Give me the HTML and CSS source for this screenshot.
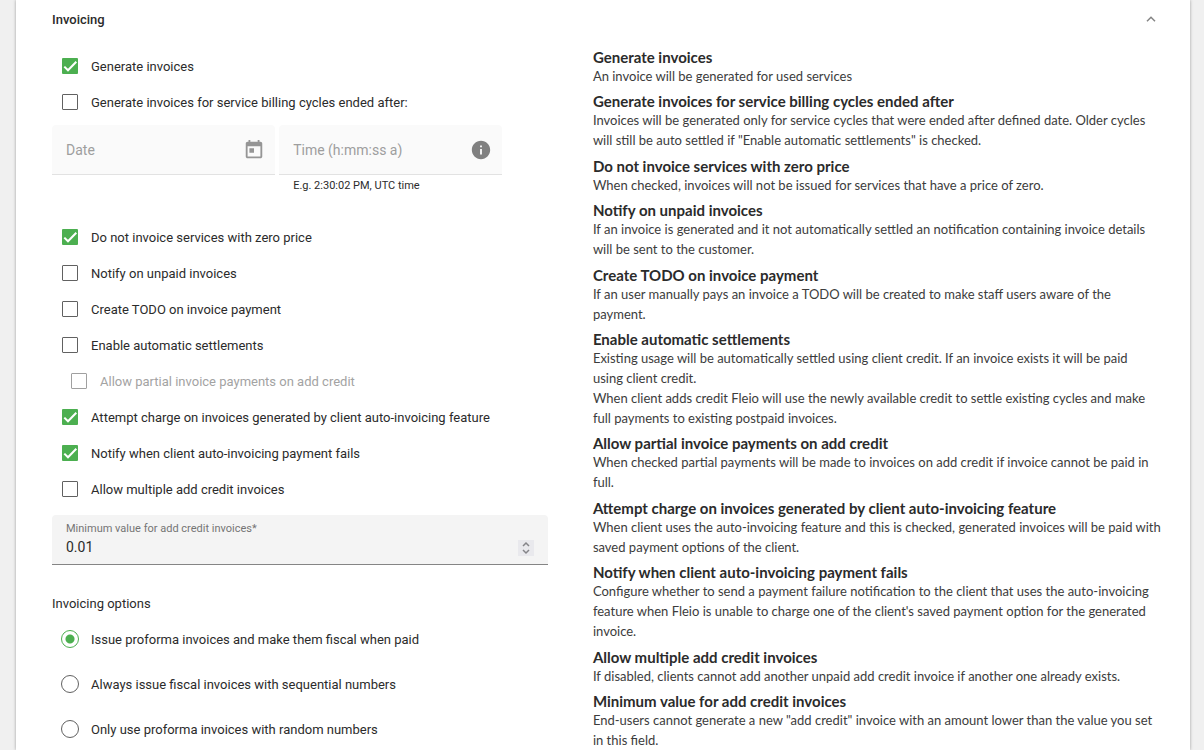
FILE: index.html
```
<!DOCTYPE html>
<html lang="en">
<head>
    <meta charset="UTF-8">
    <meta name="viewport" content="width=device-width, initial-scale=1.0">
    <title>Invoicing</title>
    <link rel="stylesheet" href="styles.css">
</head>
<body>
    <section class="panel">
        <header class="panel-header">
            <h2>Invoicing</h2>
            <button type="button" class="toggle" aria-label="Collapse">
                <svg width="10" height="6" viewBox="0 0 10 6"><path d="M1 5.2L5 1.2L9 5.2" fill="none" stroke="#858585" stroke-width="1.5"/></svg>
            </button>
        </header>

        <div class="panel-body">
            <form class="settings">
                <label class="option"><input type="checkbox" checked> Generate invoices</label>
                <label class="option"><input type="checkbox"> Generate invoices for service billing cycles ended after:</label>

                <div class="date-time">
                    <div class="field-wrap">
                        <div class="field disabled">
                            <input type="text" placeholder="Date" aria-label="Date" disabled>
                            <svg width="22" height="22" viewBox="0 0 24 24" fill="#959595"><path d="M19 3h-1V1h-2v2H8V1H6v2H5c-1.11 0-1.99.9-1.99 2L3 19c0 1.1.89 2 2 2h14c1.1 0 2-.9 2-2V5c0-1.1-.9-2-2-2zm0 16H5V8h14v11zM7 10h5v5H7z"/></svg>
                        </div>
                    </div>
                    <div class="field-wrap">
                        <div class="field disabled">
                            <input type="text" placeholder="Time (h:mm:ss a)" aria-label="Time" disabled>
                            <svg width="22" height="22" viewBox="0 0 24 24" fill="#808080"><path d="M12 2C6.48 2 2 6.48 2 12s4.48 10 10 10 10-4.48 10-10S17.52 2 12 2zm1 15h-2v-6h2v6zm0-8h-2V7h2v2z"/></svg>
                        </div>
                        <p class="hint">E.g. 2:30:02 PM, UTC time</p>
                    </div>
                </div>

                <label class="option"><input type="checkbox" checked> Do not invoice services with zero price</label>
                <label class="option"><input type="checkbox"> Notify on unpaid invoices</label>
                <label class="option"><input type="checkbox"> Create TODO on invoice payment</label>
                <label class="option"><input type="checkbox"> Enable automatic settlements</label>
                <label class="option nested"><input type="checkbox" disabled> Allow partial invoice payments on add credit</label>
                <label class="option"><input type="checkbox" checked> Attempt charge on invoices generated by client auto-invoicing feature</label>
                <label class="option"><input type="checkbox" checked> Notify when client auto-invoicing payment fails</label>
                <label class="option"><input type="checkbox"> Allow multiple add credit invoices</label>

                <div class="field amount">
                    <div class="amount-text">
                        <label for="min-value">Minimum value for add credit invoices*</label>
                        <input type="number" id="min-value" value="0.01" step="0.01">
                    </div>
                    <button type="button" class="spinner" aria-label="Change value">
                        <svg width="16" height="16" viewBox="0 0 16 16"><path d="M5 6L8 3L11 6M5 10L8 13L11 10" fill="none" stroke="#858589" stroke-width="1.5"/></svg>
                    </button>
                </div>

                <fieldset class="radios">
                    <legend>Invoicing options</legend>
                    <label class="radio"><input type="radio" name="mode" checked> Issue proforma invoices and make them fiscal when paid</label>
                    <label class="radio"><input type="radio" name="mode"> Always issue fiscal invoices with sequential numbers</label>
                    <label class="radio"><input type="radio" name="mode"> Only use proforma invoices with random numbers</label>
                </fieldset>
            </form>

            <dl class="help">
                <div>
                    <dt>Generate invoices</dt>
                    <dd>An invoice will be generated for used services</dd>
                </div>
                <div>
                    <dt>Generate invoices for service billing cycles ended after</dt>
                    <dd>Invoices will be generated only for service cycles that were ended after defined date. Older cycles<br>will still be auto settled if "Enable automatic settlements" is checked.</dd>
                </div>
                <div>
                    <dt>Do not invoice services with zero price</dt>
                    <dd>When checked, invoices will not be issued for services that have a price of zero.</dd>
                </div>
                <div>
                    <dt>Notify on unpaid invoices</dt>
                    <dd>If an invoice is generated and it not automatically settled an notification containing invoice details<br>will be sent to the customer.</dd>
                </div>
                <div>
                    <dt>Create TODO on invoice payment</dt>
                    <dd>If an user manually pays an invoice a TODO will be created to make staff users aware of the<br>payment.</dd>
                </div>
                <div>
                    <dt>Enable automatic settlements</dt>
                    <dd>Existing usage will be automatically settled using client credit. If an invoice exists it will be paid<br>using client credit.</dd>
                    <dd>When client adds credit Fleio will use the newly available credit to settle existing cycles and make<br>full payments to existing postpaid invoices.</dd>
                </div>
                <div>
                    <dt>Allow partial invoice payments on add credit</dt>
                    <dd>When checked partial payments will be made to invoices on add credit if invoice cannot be paid in<br>full.</dd>
                </div>
                <div>
                    <dt>Attempt charge on invoices generated by client auto-invoicing feature</dt>
                    <dd>When client uses the auto-invoicing feature and this is checked, generated invoices will be paid with<br>saved payment options of the client.</dd>
                </div>
                <div>
                    <dt>Notify when client auto-invoicing payment fails</dt>
                    <dd>Configure whether to send a payment failure notification to the client that uses the auto-invoicing<br>feature when Fleio is unable to charge one of the client's saved payment option for the generated<br>invoice.</dd>
                </div>
                <div>
                    <dt>Allow multiple add credit invoices</dt>
                    <dd>If disabled, clients cannot add another unpaid add credit invoice if another one already exists.</dd>
                </div>
                <div>
                    <dt>Minimum value for add credit invoices</dt>
                    <dd>End-users cannot generate a new "add credit" invoice with an amount lower than the value you set<br>in this field.</dd>
                </div>
            </dl>
        </div>
    </section>
</body>
</html>
```
FILE: styles.css
```
* {
    box-sizing: border-box;
}

body {
    margin: 0;
    padding: 0 14px 0 16px;
    background: #f0f0f0;
    font-family: Roboto, 'Liberation Sans', sans-serif;
    font-size: 13px;
    color: #2b2b2b;
}

.panel {
    min-height: 100vh;
    padding: 0 36px;
    background: #fff;
    box-shadow: 0 0 3px rgba(0, 0, 0, 0.35);
}

.panel-header {
    display: flex;
    align-items: center;
    justify-content: space-between;
    height: 38px;
}

h2 {
    margin: 0;
    font-size: 13px;
    font-weight: 500;
}

button {
    display: flex;
    align-items: center;
    justify-content: center;
    padding: 0;
    border: none;
    background: none;
    cursor: pointer;
}

.toggle {
    width: 6px;
    height: 16px;
}

.toggle svg {
    flex: none;
}

.panel-body {
    display: grid;
    grid-template-columns: 45% 1fr;
    gap: 45px;
    padding-top: 10px;
}

/* settings */

.option {
    display: flex;
    align-items: center;
    gap: 13px;
    height: 36px;
    padding-left: 10px;
}

.nested {
    padding-left: 19px;
    color: #a3a3a3;
}

input[type="checkbox"], input[type="radio"] {
    appearance: none;
    flex: none;
    margin: 0;
    width: 16px;
    height: 16px;
    border: 1px solid #616161;
    border-radius: 1px;
}

input[type="checkbox"]:disabled {
    border-color: #a0a0a0;
}

input[type="checkbox"]:checked {
    border: none;
    background: #4caf50 url("data:image/svg+xml,%3Csvg xmlns='http://www.w3.org/2000/svg' viewBox='0 0 16 16'%3E%3Cpath d='M2.3 8.6L6 12.3L14.3 3.8' fill='none' stroke='white' stroke-width='2'/%3E%3C/svg%3E");
}

.date-time {
    display: flex;
    gap: 4px;
    height: 94px;
    margin-top: 5px;
}

.field-wrap {
    width: 45%;
}

.field {
    display: flex;
    align-items: center;
    height: 50px;
    padding: 0 10px 0 14px;
    background: #f4f4f4;
    border-bottom: 1px solid #858585;
    border-radius: 4px 4px 0 0;
}

.field input {
    flex: 1;
    min-width: 0;
    padding: 0;
    border: none;
    outline: none;
    background: none;
    font: inherit;
    font-size: 14px;
    color: #2b2b2b;
}

.disabled {
    background: #fafafa;
    border-color: #e2e2e2;
}

.disabled input::placeholder {
    color: #9e9e9e;
}

.hint {
    margin: 0;
    padding-left: 14px;
    font-size: 11px;
    line-height: 22px;
}

.amount {
    align-items: flex-end;
    margin-top: 8px;
    padding-right: 14px;
    padding-bottom: 8px;
}

.amount-text {
    display: flex;
    flex: 1;
    flex-direction: column;
}

.amount label {
    font-size: 11px;
    line-height: 18px;
    color: #757575;
}

.amount input {
    flex: none;
    height: 18px;
    appearance: textfield;
}

.amount input::-webkit-inner-spin-button {
    display: none;
}

.spinner {
    width: 16px;
    height: 16px;
    background: #e9e9ed;
}

.radios {
    display: flex;
    flex-direction: column;
    gap: 21px;
    margin: 29px 0 0;
    padding: 13px 0 9px;
    border: none;
}

legend {
    padding: 0;
    line-height: 20px;
}

.radio {
    display: flex;
    align-items: center;
    gap: 12px;
    height: 24px;
    padding-left: 9px;
}

input[type="radio"] {
    width: 18px;
    height: 18px;
    border-radius: 50%;
}

input[type="radio"]:checked {
    border-color: #4caf50;
    background: radial-gradient(circle, #4caf50 4px, transparent 5px);
}

/* help texts */

.help {
    display: flex;
    flex-direction: column;
    justify-content: space-between;
    margin: 0 -12px 0 0;
    font-family: Lato, 'Liberation Sans', sans-serif;
}

dt {
    font-size: 15px;
    font-weight: 700;
    line-height: 18px;
}

dd {
    margin: 0;
    font-size: 13px;
    line-height: 20px;
    color: #3c3c3c;
}
```
